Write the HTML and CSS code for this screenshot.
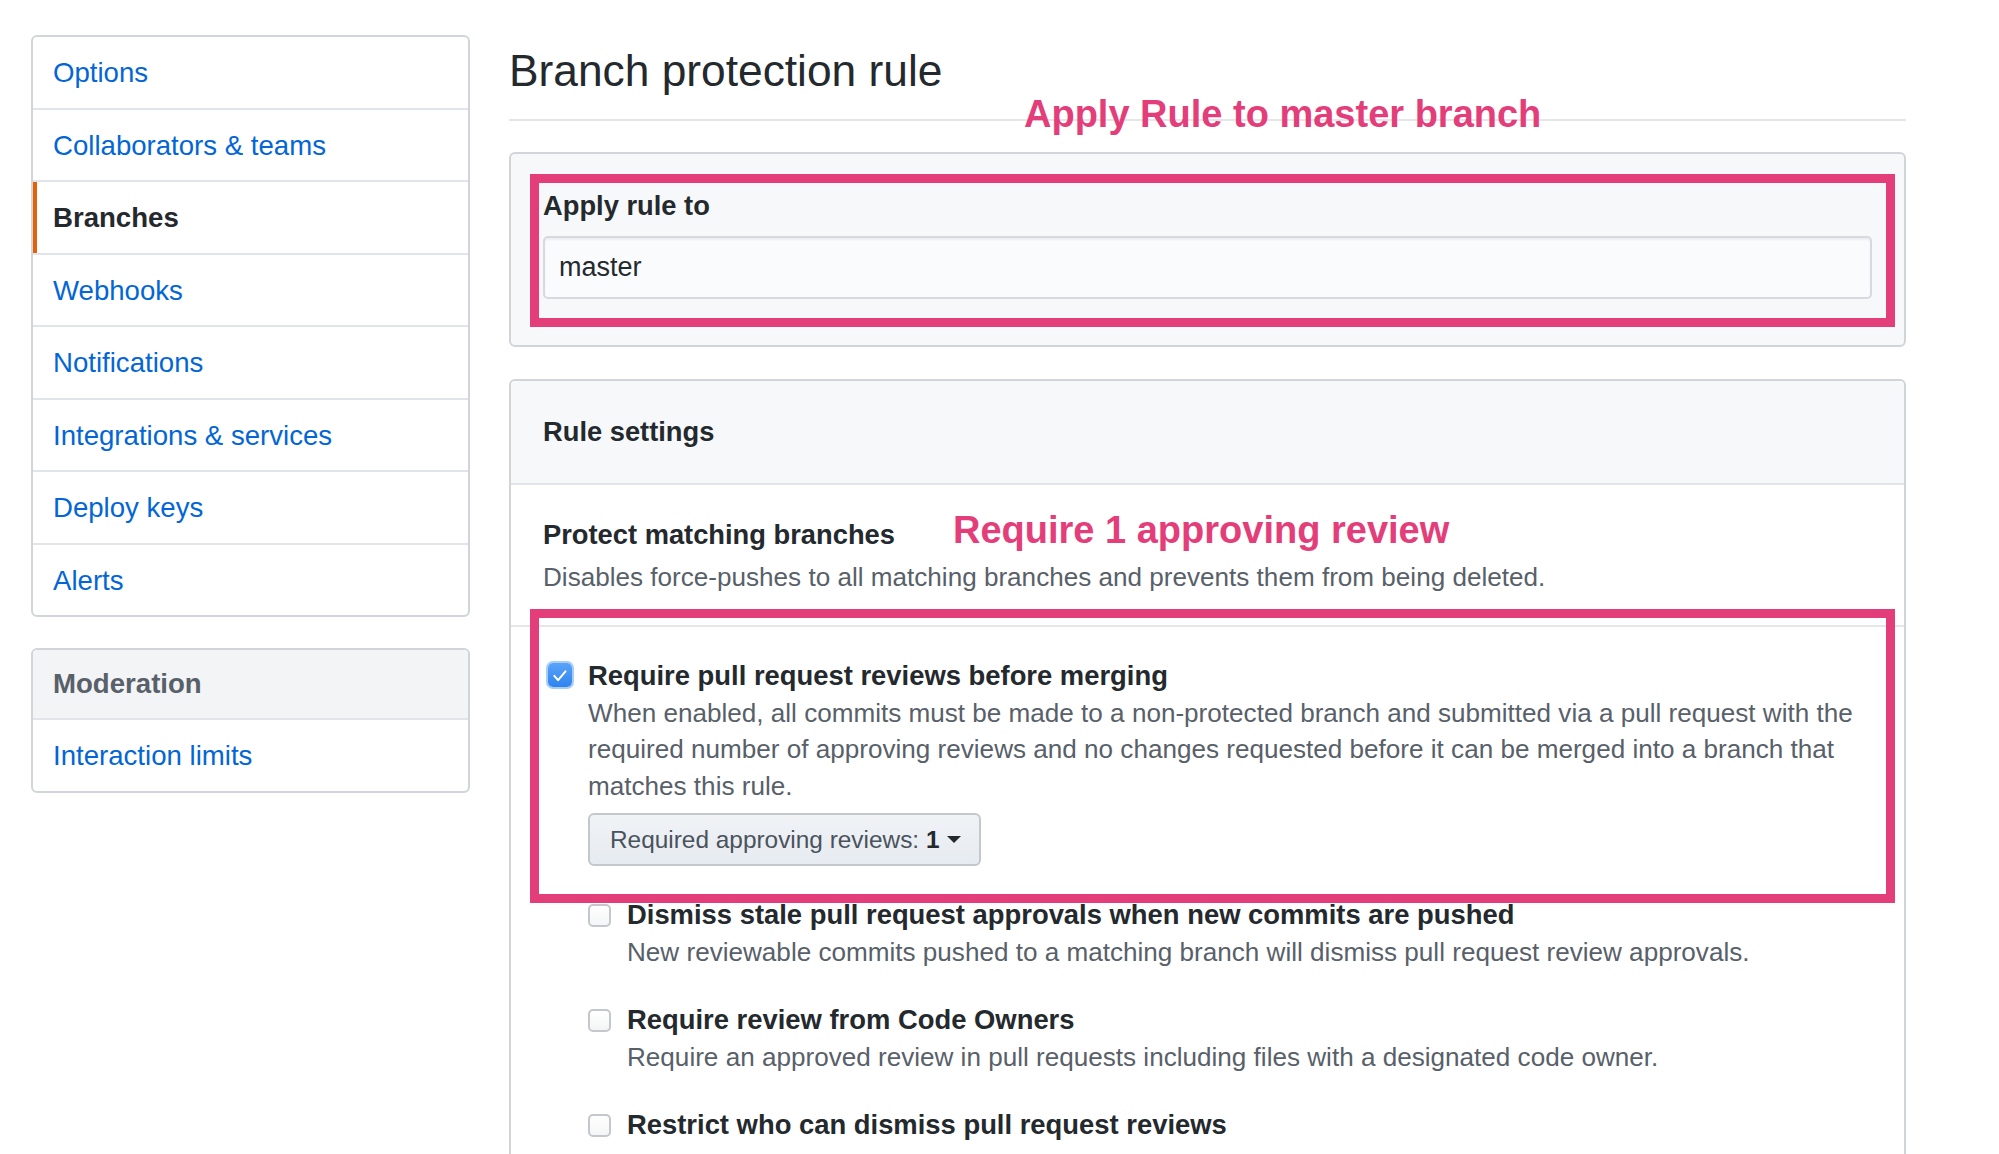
FILE: index.html
```html
<!DOCTYPE html>
<html lang="en">
<head>
<meta charset="utf-8">
<title>Branch protection rule</title>
<link rel="stylesheet" href="styles.css">
</head>
<body>
<div class="page">
  <nav class="sidebar">
    <div class="menu">
      <a class="menu-item" href="#">Options</a>
      <a class="menu-item" href="#">Collaborators &amp; teams</a>
      <a class="menu-item selected" href="#">Branches</a>
      <a class="menu-item" href="#">Webhooks</a>
      <a class="menu-item" href="#">Notifications</a>
      <a class="menu-item" href="#">Integrations &amp; services</a>
      <a class="menu-item" href="#">Deploy keys</a>
      <a class="menu-item" href="#">Alerts</a>
    </div>
    <div class="menu">
      <div class="menu-heading">Moderation</div>
      <a class="menu-item" href="#">Interaction limits</a>
    </div>
  </nav>

  <main class="main">
    <div class="subhead">
      <h1 class="subhead-title">Branch protection rule</h1>
      <span class="note note-apply">Apply Rule to master branch</span>
    </div>

    <div class="box apply-box">
      <div class="highlight">
        <label class="field-label">Apply rule to</label>
        <div class="input">master</div>
      </div>
    </div>

    <div class="box settings">
      <div class="box-header">Rule settings</div>
      <div class="section">
        <div class="section-title">Protect matching branches</div>
        <p class="desc section-desc">Disables force-pushes to all matching branches and prevents them from being deleted.</p>
        <span class="note note-review">Require 1 approving review</span>
      </div>

      <div class="rules">
        <div class="rule rule-main">
          <span class="annot-box"></span>
          <span class="checkbox checked"><svg viewBox="0 0 24 24" width="24" height="24"><path d="M6.3 12.8l3.8 4.4 7.4-8.9" fill="none" stroke="#fff" stroke-width="2" stroke-linecap="round" stroke-linejoin="round"/></svg></span>
          <div class="rule-body">
            <div class="rule-title">Require pull request reviews before merging</div>
            <p class="desc">When enabled, all commits must be made to a non-protected branch and submitted via a pull request with the<br>required number of approving reviews and no changes requested before it can be merged into a branch that<br>matches this rule.</p>
            <button class="select-btn" type="button">Required approving reviews:&nbsp;<strong>1</strong><span class="caret"></span></button>
          </div>
        </div>

        <div class="rule rule-sub">
          <span class="checkbox"></span>
          <div class="rule-body">
            <div class="rule-title">Dismiss stale pull request approvals when new commits are pushed</div>
            <p class="desc">New reviewable commits pushed to a matching branch will dismiss pull request review approvals.</p>
          </div>
        </div>

        <div class="rule rule-sub">
          <span class="checkbox"></span>
          <div class="rule-body">
            <div class="rule-title">Require review from Code Owners</div>
            <p class="desc">Require an approved review in pull requests including files with a designated code owner.</p>
          </div>
        </div>

        <div class="rule rule-sub">
          <span class="checkbox"></span>
          <div class="rule-body">
            <div class="rule-title">Restrict who can dismiss pull request reviews</div>
          </div>
        </div>
      </div>
    </div>
  </main>
</div>
</body>
</html>
```

FILE: styles.css
```css
html, body {
  margin: 0;
  padding: 0;
  background: #ffffff;
}

body {
  font-family: "Liberation Sans", Arial, Helvetica, sans-serif;
  color: #24292e;
  overflow: hidden;
}

.page {
  display: flex;
  align-items: flex-start;
  gap: 39px;
  padding: 35px 0 0 31px;
}

/* ---------- Sidebar ---------- */
.sidebar {
  width: 439px;
  flex: none;
  display: flex;
  flex-direction: column;
  gap: 31px;
}

.menu {
  border: 2px solid #d1d5da;
  border-radius: 6px;
  overflow: hidden;
  background: #fff;
}

.menu-item {
  display: block;
  padding: 16px 20px 14px;
  font-size: 27.6px;
  line-height: 40.5px;
  color: #0366d6;
  text-decoration: none;
  border-bottom: 2px solid #e1e4e8;
}

.menu-item:last-child {
  border-bottom: 0;
}

.menu-item.selected {
  color: #24292e;
  font-weight: bold;
  box-shadow: inset 4px 0 0 #e36209;
}

.menu-heading {
  padding: 14px 20px 13.5px;
  font-size: 27.6px;
  line-height: 40.5px;
  font-weight: bold;
  color: #586069;
  background: #f3f4f6;
  border-bottom: 2px solid #e1e4e8;
}

/* ---------- Main ---------- */
.main {
  width: 1397px;
  flex: none;
}

.subhead {
  position: relative;
  padding: 8px 0 20px;
  border-bottom: 2px solid #e4e6ea;
}

.subhead-title {
  margin: 0;
  font-size: 44.3px;
  line-height: 56px;
  font-weight: normal;
  color: #24292e;
}

.note {
  position: absolute;
  color: #e33e7a;
  font-weight: bold;
  font-size: 38px;
  line-height: 38px;
  white-space: nowrap;
  z-index: 3;
}

.note-apply {
  left: 515px;
  top: 60px;
}

.note-review {
  left: 442px;
  top: 26px;
}

.box {
  border: 2px solid #d1d5da;
  border-radius: 6px;
}

.apply-box {
  margin-top: 31px;
  background: #f6f8fa;
  padding: 20px 9px 18px 19px;
}

.highlight {
  border: 9px solid #e33e7a;
  padding: 5px 14px 19px 4px;
}

.field-label {
  display: block;
  font-size: 27.3px;
  line-height: 36px;
  font-weight: bold;
  color: #24292e;
}

.input {
  margin-top: 12px;
  height: 63px;
  box-sizing: border-box;
  display: flex;
  align-items: center;
  padding-left: 14px;
  font-size: 27px;
  color: #24292e;
  background: #fafbfc;
  border: 2px solid #d6d9dd;
  border-radius: 5px;
  box-shadow: inset 0 2px 2px rgba(27, 31, 35, 0.06);
}

.settings {
  margin-top: 32px;
  background: #fff;
}

.box-header {
  padding: 33px 32px;
  font-size: 27.3px;
  line-height: 36px;
  font-weight: bold;
  background: #f6f8fa;
  border-bottom: 2px solid #e1e4e8;
  border-radius: 6px 6px 0 0;
}

.section {
  position: relative;
  padding: 31.5px 32px 30px;
  border-bottom: 2px solid #e4e6ea;
}

.section-title {
  font-size: 27.3px;
  line-height: 36px;
  font-weight: bold;
}

.desc {
  margin: 0;
  font-size: 26.1px;
  line-height: 36.5px;
  color: #586069;
}

.section-desc {
  margin-top: 6px;
}

.rules {
  padding: 31.25px 32px 140px 37px;
}

.rule {
  display: flex;
  align-items: flex-start;
  gap: 16px;
}

.rule-main {
  position: relative;
}

.annot-box {
  position: absolute;
  left: -18px;
  top: -49.25px;
  width: 1365px;
  height: 294px;
  box-sizing: border-box;
  border: 9px solid #e33e7a;
  pointer-events: none;
  z-index: 2;
}

.rule-sub {
  margin-left: 40px;
  margin-top: 32px;
}

.rule-main + .rule-sub {
  margin-top: 31.25px;
}

.rule-body {
  flex: 1;
}

.rule-title {
  font-size: 27.4px;
  line-height: 36.5px;
  font-weight: bold;
  color: #24292e;
}

.checkbox {
  flex: none;
  width: 23px;
  height: 23px;
  box-sizing: border-box;
  margin-top: 6.75px;
  border: 2px solid #c4c7cb;
  border-radius: 5px;
  background: linear-gradient(#ffffff, #f4f5f6);
}

.checkbox.checked {
  width: 24px;
  height: 24px;
  margin-top: 4.75px;
  border: 0;
  background: linear-gradient(#5aa3f8, #2f84ee);
  box-shadow: 0 0 0 2px #a8cdf7;
  display: flex;
}

.checkbox svg {
  display: block;
}

.select-btn {
  margin-top: 8.75px;
  width: 393px;
  height: 53px;
  box-sizing: border-box;
  display: inline-flex;
  align-items: center;
  padding: 0 18px 0 20px;
  font-family: inherit;
  font-size: 24.4px;
  color: #4a535c;
  background: linear-gradient(#f0f3f6, #e6ebf1);
  border: 2px solid #c4c8cd;
  border-radius: 6px;
  white-space: nowrap;
}

.select-btn strong {
  color: #24292e;
  font-weight: bold;
}

.caret {
  display: inline-block;
  width: 0;
  height: 0;
  margin-left: 8px;
  border-top: 7px solid #24292e;
  border-left: 7px solid transparent;
  border-right: 7px solid transparent;
}
```
